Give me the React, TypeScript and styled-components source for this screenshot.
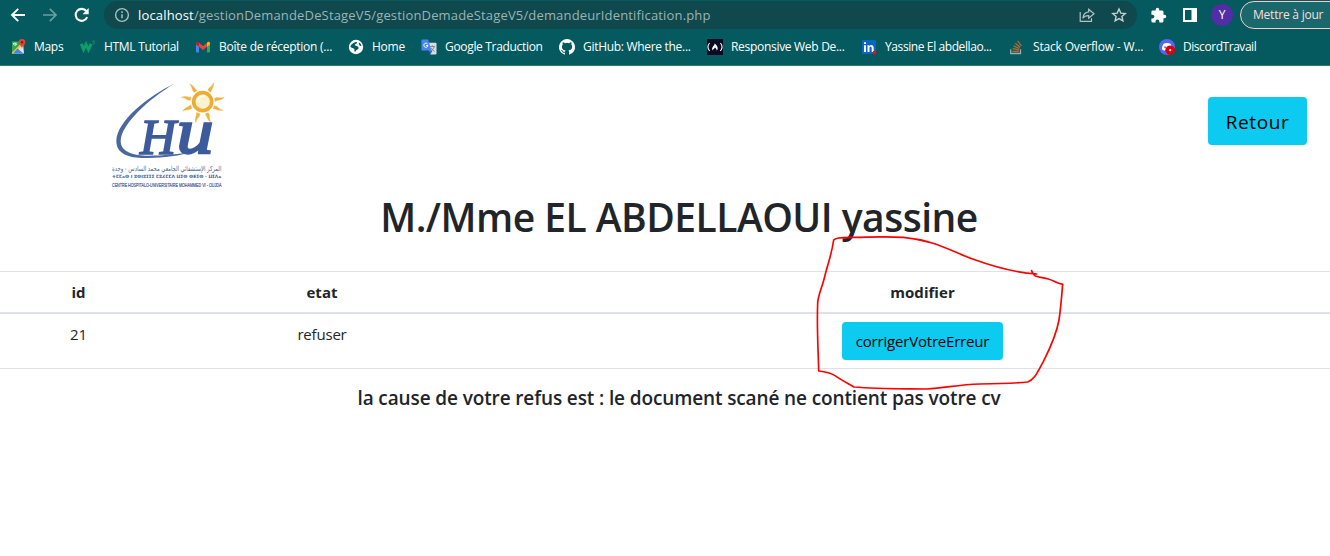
import React from 'react';
import styled, { createGlobalStyle } from 'styled-components';

const GlobalStyle = createGlobalStyle`
  *, *::before, *::after { box-sizing: border-box; }
  body {
    margin: 0;
    overflow: hidden;
    background: #fff;
    color: #212529;
    font-family: "Open Sans", "Noto Sans", sans-serif;
    font-size: 16px;
    line-height: 1.5;
  }
`;

const Browser = styled.div`
  width: 100%;
  height: 556px;
  overflow: hidden;
  position: relative;
`;

const Chrome = styled.header`
  height: 66px;
  background: #045a5f;
  border-bottom: 1px solid #2f7a7e;
`;

const Toolbar = styled.div`
  display: flex;
  align-items: center;
  height: 30px;
  width: 1380px;
  padding: 1px 0 1px 10px;
`;

const NavIcons = styled.div`
  display: flex;
  gap: 16px;
  width: 94px;
  flex: none;
`;

const AddressBar = styled.div`
  display: flex;
  flex: none;
  align-items: center;
  width: 1033px;
  height: 28px;
  padding: 0 10px;
  border-radius: 14px;
  background: #0f484d;
`;

const Url = styled.span`
  flex: 1;
  margin-left: 8px;
  font-size: 13px;
  line-height: 20px;
  letter-spacing: 0.16px;
  color: #9bb4b6;
`;

const Host = styled.span`
  color: #fff;
`;

const PillActions = styled.div`
  display: flex;
  gap: 16px;
`;

const Actions = styled.div`
  display: flex;
  flex: none;
  align-items: center;
  margin-left: 13px;
`;

const PanelSlot = styled.span`
  margin-left: 16px;
`;

const Avatar = styled.span`
  width: 22px;
  height: 22px;
  margin: 0 7px 0 14px;
  border-radius: 50%;
  background: #512da8;
  color: #fff;
  font-size: 12px;
  line-height: 22px;
  text-align: center;
`;

const Update = styled.span`
  width: 118px;
  height: 28px;
  padding-left: 12px;
  border: 1px solid #f3cfca;
  border-radius: 14px;
  background: #1b686c;
  color: #f9dedb;
  font-size: 12px;
  line-height: 26px;
  letter-spacing: -0.22px;
  white-space: nowrap;
`;

const Bookmarks = styled.nav`
  display: flex;
  height: 34px;
  padding-left: 10px;
`;

const Bookmark = styled.span<{ $width: number; $spacing?: number }>`
  display: flex;
  align-items: center;
  flex: none;
  gap: 8px;
  width: ${(p) => p.$width}px;
  color: #fff;
  font-size: 12px;
  line-height: 16px;
  letter-spacing: ${(p) => p.$spacing ?? -0.25}px;
  white-space: nowrap;
`;

const Icon = styled.svg`
  display: block;
  flex: none;
  overflow: visible;
`;

const Page = styled.main`
  width: 1358px;
`;

const Banner = styled.div`
  display: flex;
  justify-content: space-between;
  align-items: flex-start;
  height: 125px;
  padding: 4px 51px 0 100px;
`;

const Button = styled.button<{ $large?: boolean }>`
  height: ${(p) => (p.$large ? 48 : 38)}px;
  width: ${(p) => (p.$large ? 99 : 161)}px;
  margin-top: ${(p) => (p.$large ? 27 : 0)}px;
  padding: ${(p) => (p.$large ? 2 : 1)}px 0 0;
  border: 0;
  border-radius: 4px;
  background: #0dcaf0;
  color: #000;
  font-family: inherit;
  font-size: ${(p) => (p.$large ? 19 : 15)}px;
  font-weight: 400;
  letter-spacing: ${(p) => (p.$large ? 0.6 : -0.2)}px;
  line-height: 24px;
  vertical-align: top;
`;

const Title = styled.h1`
  margin: 0;
  padding-top: 2px;
  height: 80px;
  font-size: 39px;
  font-weight: 600;
  line-height: 48px;
  letter-spacing: -0.52px;
  text-align: center;
`;

const Table = styled.table`
  width: 100%;
  table-layout: fixed;
  border-collapse: collapse;
  font-size: 15px;
  line-height: 24px;
  text-align: center;
`;

const HeadCell = styled.th`
  height: 41px;
  padding: 0 8px;
  border-top: 1px solid #dee2e6;
  border-bottom: 2px solid #dee2e6;
  font-weight: 700;
  letter-spacing: 0.05px;
`;

const Cell = styled.td`
  height: 55px;
  padding: 8px;
  border-bottom: 1px solid #dee2e6;
  letter-spacing: -0.2px;
  vertical-align: top;
`;

const Reason = styled.h5`
  margin: 17px 0 0;
  font-size: 19px;
  font-weight: 600;
  line-height: 24px;
  letter-spacing: -0.12px;
  text-align: center;
`;

const Annotation = styled.svg`
  position: absolute;
  left: 800px;
  top: 225px;
  pointer-events: none;
`;

const BackIcon = () => (
  <Icon width="16" height="16" viewBox="0 0 16 16" fill="none" stroke="#fff" strokeWidth="1.9">
    <path d="M15 8H2.2M8.2 1.8 2 8l6.2 6.2" />
  </Icon>
);

const ForwardIcon = () => (
  <Icon width="16" height="16" viewBox="0 0 16 16" fill="none" stroke="#6a9fa2" strokeWidth="1.7">
    <path d="M1 8h12.8M7.8 1.8 14 8l-6.2 6.2" />
  </Icon>
);

const ReloadIcon = () => (
  <Icon width="16" height="16" viewBox="0 0 16 16">
    <path d="M13.2 10.2A6 6 0 1 1 12.3 4" fill="none" stroke="#fff" strokeWidth="2.1" />
    <path d="M14.7 1v6.2H8.5z" fill="#fff" />
  </Icon>
);

const InfoIcon = () => (
  <Icon width="16" height="16" viewBox="0 0 16 16" fill="none" stroke="#a9bfc0" strokeWidth="1.4">
    <circle cx="8" cy="8" r="6.4" />
    <path d="M8 7.2v4M8 4.3v1.6" strokeWidth="1.5" />
  </Icon>
);

const ShareIcon = () => (
  <Icon width="16" height="16" viewBox="0 0 16 16" fill="none" stroke="#b1c3c4" strokeWidth="1.2">
    <path d="M1.2 5v9.3h11.3v-3" />
    <path d="M9.7 2.2 15 6.7l-5.3 4.4V8.6C6.7 8.5 5 9.4 3.8 11.2 4.2 7.7 6.2 5.2 9.7 4.8z" />
  </Icon>
);

const StarIcon = () => (
  <Icon width="16" height="16" viewBox="0 0 16 16" fill="none" stroke="#c3d1d2" strokeWidth="1.4">
    <path d="m8 2 1.8 4.1 4.5.4-3.4 3 1 4.4L8 11.6l-3.9 2.3 1-4.4-3.4-3 4.5-.4z" />
  </Icon>
);

const PuzzleIcon = () => (
  <Icon width="17" height="17" viewBox="0 0 24 24" fill="#fff">
    <path d="M20.5 11H19V7a2 2 0 0 0-2-2h-4V3.5a2.5 2.5 0 0 0-5 0V5H4a2 2 0 0 0-2 2v3.8h1.5a2.7 2.7 0 0 1 0 5.4H2V20a2 2 0 0 0 2 2h3.8v-1.5a2.7 2.7 0 0 1 5.4 0V22H17a2 2 0 0 0 2-2v-4h1.5a2.5 2.5 0 0 0 0-5z" />
  </Icon>
);

const PanelIcon = () => (
  <Icon width="14" height="14" viewBox="0 0 14 14">
    <path fill="#fff" fillRule="evenodd" d="M0 0h14v14H0zM2 2v10h6.5V2z" />
  </Icon>
);

const MapsIcon = () => (
  <Icon width="16" height="16" viewBox="0 0 16 16">
    <path d="M2 2.5h11v12H2z" fill="#34a853" />
    <path d="M2 14.5 13 3.5l1 11z" fill="#dfe6e9" />
    <path d="m1.5 14 11-11 1.5 1.5-10.5 10.5z" fill="#fbc02d" />
    <path d="m7.5 9.5 6 5H3z" fill="#4285f4" />
    <path d="M3.6 4.2h3M3.5 4.2a1.5 1.5 0 1 0 3 .9H5" fill="none" stroke="#fff" strokeWidth=".9" />
    <path d="M12 0a3.3 3.3 0 0 1 3.3 3.3C15.3 6 12.3 6.5 12 10c-.3-3.5-3.3-4-3.3-6.7A3.3 3.3 0 0 1 12 0z" fill="#ea4335" />
    <circle cx="12" cy="3.3" r="1.2" fill="#7b1e16" />
  </Icon>
);

const SchoolsIcon = () => (
  <Icon width="16" height="16" viewBox="0 0 16 16" fill="none" stroke="#0b9f66">
    <path d="m1.2 4.8 2.4 5.8L6 5.4l2.5 5.2 2.6-5.8" strokeWidth="3" />
    <path d="M12.5 2h2l-1.200 1.400c1.600 0 1.500 2.200-.8 1.700" strokeWidth=".8" />
  </Icon>
);

const GmailIcon = () => (
  <Icon width="16" height="16" viewBox="0 0 16 16">
    <path d="M1 4h3v9.5H2a1 1 0 0 1-1-1z" fill="#4285f4" />
    <path d="M12 4h3v8.5a1 1 0 0 1-1 1h-2z" fill="#34a853" />
    <path d="M4 3.8 8 7l4-3.2v4L8 11 4 7.8z" fill="#ea4335" />
    <path d="M1 4.5C1 2.6 2.7 2.3 4 3.5v4.3L1 5.6z" fill="#c5221f" />
    <path d="M15 4.5c0-1.9-1.7-2.2-3-1v4.3l3-2.2z" fill="#fbbc04" />
  </Icon>
);

const GlobeIcon = () => (
  <Icon width="16" height="16" viewBox="0 0 16 16">
    <circle cx="8" cy="8" r="7.2" fill="#fff" />
    <path d="M2.3 7.8C3 5 5 4.2 7 3.2c1.5-.6 2.3 0 1.8 1-.5.9-2 .8-2 1.9 0 1 2.7.7 3.5 1.9.9 1.3-.4 2.6-1.6 3-.9.3-.9 1.5-1.8 1.7-1-.4.1-2.2-.9-3C4.9 9 3.600 9.100 2.3 7.800zM10.800 3.600c1.500.6 2.300 1.800 2.600 3.300-1.300.5-2.800-.9-2.600-3.300z" fill="#045a5f" />
  </Icon>
);

const TranslateIcon = () => (
  <Icon width="16" height="16" viewBox="0 0 17 17">
    <path d="M7 4h8.5a1 1 0 0 1 1 1v10.5a1 1 0 0 1-1 1H10z" fill="#dadce0" />
    <path d="M9.5 8H15M12.2 6.800V8M14 8c-.5 2.300-2 4-4 5M11 9.500c.5 1.500 2 3 3.500 3.500" fill="none" stroke="#718087" strokeWidth=".9" />
    <path d="M1.5.5h6l3.700 11.800H1.500a1 1 0 0 1-1-1v-9.800a1 1 0 0 1 1-1z" fill="#4a86ee" />
    <path d="m8.5 12.300 1.700 4.200 2-4.200z" fill="#3367d6" />
    <path d="M7 5.300a2.200 2.200 0 1 0 .4 1.700H5.300" fill="none" stroke="#fff" strokeWidth="1" />
  </Icon>
);

const GithubIcon = () => (
  <Icon width="16" height="16" viewBox="0 0 16 16" fill="#fff">
    <path d="M8 0a8 8 0 0 0-2.53 15.59c.4.07.55-.17.55-.38v-1.49c-2.01.37-2.53-.49-2.69-.94-.09-.23-.48-.94-.82-1.13-.28-.15-.68-.52-.01-.53.63-.01 1.08.58 1.23.82.72 1.21 1.87.87 2.33.66.07-.52.28-.87.51-1.07-1.78-.2-3.64-.89-3.64-3.95 0-.87.31-1.59.82-2.15-.08-.2-.36-1.02.08-2.12 0 0 .67-.21 2.2.82a7.600 7.600 0 0 1 4 0c1.530-1.040 2.200-.82 2.200-.82.44 1.100.16 1.920.08 2.120.51.56.82 1.270.82 2.150 0 3.070-1.870 3.750-3.650 3.950.29.25.54.73.54 1.480v2.200c0 .21.15.46.55.38A8 8 0 0 0 8 0z" />
  </Icon>
);

const CampIcon = () => (
  <Icon width="16" height="16" viewBox="0 0 16 16">
    <path fill="#0a0a23" d="M0 0h16v16H0z" />
    <path d="M2.600 4c-2 2.400-2 5.600 0 8M13.400 4c2 2.400 2 5.600 0 8" fill="none" stroke="#fff" strokeWidth="1.1" />
    <path d="M5.800 11.600c-1.500-1.800-.4-3.400 1-5 .5-.7.800-1.300.6-2.200 2.200 1.100 3.400 3.300 3.300 5.200 0 .9-.4 1.600-1 2C9.600 10.100 9 9.200 7.900 8.500c-.2 1.200-2.200 1.500-2.100 3.100z" fill="#fff" />
  </Icon>
);

const LinkedinIcon = () => (
  <Icon width="16" height="16" viewBox="0 0 16 16">
    <rect x="1" y="1" width="14" height="14" rx="1" fill="#0a66c2" />
    <path d="M3 6.200h2V13H3zM3 3.200h2v1.900H3zM6.500 6.200h1.900v1c1.200-1.800 4.300-1.500 4.300 1.600V13h-2V9.200c0-1.900-2.200-1.900-2.200 0V13h-2z" fill="#fff" />
    <circle cx="13.5" cy="13.8" r="2" fill="#e01020" />
  </Icon>
);

const StackIcon = () => (
  <Icon width="16" height="16" viewBox="0 0 16 16" fill="none">
    <path d="M1.700 10.300v4.200h9.800v-4.200" stroke="#9fa9a5" strokeWidth="1.3" />
    <path d="M3.500 12.300h6.300M3.700 9.700l6.200 1.200M4.600 6.900l5.800 2.600M6.300 4.300l4.900 4M8.700 1.900l3.700 5.100" stroke="#bf6a2a" strokeWidth="1.2" />
  </Icon>
);

const DiscordIcon = () => (
  <Icon width="16" height="16" viewBox="0 0 16 16">
    <circle cx="8" cy="8" r="8" fill="#5865f2" />
    <path d="M4.600 4.700c2-1 4.800-1 6.800 0 1.300 1.800 1.800 3.800 1.500 5.800-.9.700-1.700 1-2.500 1.200l-.7-1H6.300l-.7 1c-.8-.2-1.600-.5-2.500-1.200-.3-2 .2-4 1.500-5.800z" fill="#fff" />
    <circle cx="6.100" cy="8.300" r="1" fill="#5865f2" />
    <circle cx="11.200" cy="11.200" r="4.800" fill="#db0010" />
    <circle cx="11.200" cy="11.200" r="1.100" fill="#fff" />
  </Icon>
);

const sunRays = [32, 80, 115, 160, 200, 246, 283, 325];

const HospitalLogo = () => (
  <Icon width="140" height="120" viewBox="0 0 420 360">
    <g transform="translate(308 95)">
      {sunRays.map((angle) => (
        <path
          key={angle}
          d="M-4 -37C-9 -46 1 -52 -2 -66C7 -54 1 -47 6 -37Z"
          fill="#f0b23c"
          stroke="#f0b23c"
          strokeWidth="1"
          transform={`rotate(${angle})`}
        />
      ))}
      <circle r="27" fill="#fff3cf" stroke="#efac34" strokeWidth="11" />
      <path d="M-17 4C-15 -10 -5 -18 7 -19" fill="none" stroke="#fff" strokeWidth="4" />
    </g>
    <path
      d="M225 40C141 81 51 153 49 213C49 255 93 266 145 264C190 263 240 259 282 243C240 253 190 257 145 257C101 256 62 247 62 212C65 163 144 88 225 40Z"
      fill="#4a679f"
    />
    <g fill="#3d5b9c" stroke="#3d5b9c" fontFamily="Liberation Serif, serif" fontStyle="italic">
      <text x="120" y="251" fontSize="152" strokeWidth="5" textLength="108" lengthAdjust="spacingAndGlyphs">H</text>
      <text x="230" y="248" fontSize="190" strokeWidth="7" textLength="110" lengthAdjust="spacingAndGlyphs">u</text>
    </g>
    <g fill="#4a5f90" fontFamily="DejaVu Sans, sans-serif">
      <text x="36" y="302" fontSize="21" textLength="328" lengthAdjust="spacingAndGlyphs">المركز الإستشفائي الجامعي محمد السادس - وجدة</text>
      <text x="36" y="325" fontSize="13" fontWeight="700" textLength="328" lengthAdjust="spacingAndGlyphs">ⵜⵎⵎⴰⵙ ⵏ ⵓⵙⵏⵓⵊⵊⵉ ⵎⵓⵃⵎⵎⴷ ⵡⵉⵙ ⵙⴹⵉⵙ - ⵡⵊⴷⴰ</text>
      <text x="36" y="350" fontSize="18" fill="#35569a" stroke="#35569a" strokeWidth=".6" fontFamily="Liberation Sans, sans-serif" textLength="328" lengthAdjust="spacingAndGlyphs">CENTRE HOSPITALO-UNIVERSITAIRE MOHAMMED VI - OUJDA</text>
    </g>
  </Icon>
);

export default function App() {
  return (
    <Browser>
      <GlobalStyle />
      <Chrome>
        <Toolbar>
          <NavIcons><BackIcon /><ForwardIcon /><ReloadIcon /></NavIcons>
          <AddressBar>
            <InfoIcon />
            <Url><Host>localhost</Host>/gestionDemandeDeStageV5/gestionDemadeStageV5/demandeurIdentification.php</Url>
            <PillActions><ShareIcon /><StarIcon /></PillActions>
          </AddressBar>
          <Actions>
            <PuzzleIcon />
            <PanelSlot><PanelIcon /></PanelSlot>
            <Avatar>Y</Avatar>
            <Update>Mettre à jour</Update>
          </Actions>
        </Toolbar>
        <Bookmarks>
          <Bookmark $width={70} $spacing={-0.3}><MapsIcon />Maps</Bookmark>
          <Bookmark $width={115} $spacing={-0.3}><SchoolsIcon />HTML Tutorial</Bookmark>
          <Bookmark $width={153}><GmailIcon />Boîte de réception (...</Bookmark>
          <Bookmark $width={73}><GlobeIcon />Home</Bookmark>
          <Bookmark $width={138} $spacing={-0.32}><TranslateIcon />Google Traduction</Bookmark>
          <Bookmark $width={148} $spacing={-0.3}><GithubIcon />GitHub: Where the...</Bookmark>
          <Bookmark $width={154} $spacing={-0.3}><CampIcon />Responsive Web De...</Bookmark>
          <Bookmark $width={148} $spacing={-0.4}><LinkedinIcon />Yassine El abdellao...</Bookmark>
          <Bookmark $width={150} $spacing={-0.17}><StackIcon />Stack Overflow - W...</Bookmark>
          <Bookmark $width={120} $spacing={-0.45}><DiscordIcon />DiscordTravail</Bookmark>
        </Bookmarks>
      </Chrome>
      <Page>
        <Banner>
          <HospitalLogo />
          <Button $large>Retour</Button>
        </Banner>
        <Title>M./Mme EL ABDELLAOUI yassine</Title>
        <Table>
          <colgroup>
            <col width="157" />
            <col width="330" />
            <col width="871" />
          </colgroup>
          <thead>
            <tr><HeadCell>id</HeadCell><HeadCell>etat</HeadCell><HeadCell>modifier</HeadCell></tr>
          </thead>
          <tbody>
            <tr>
              <Cell>21</Cell>
              <Cell>refuser</Cell>
              <Cell><Button>corrigerVotreErreur</Button></Cell>
            </tr>
          </tbody>
        </Table>
        <Reason>la cause de votre refus est : le document scané ne contient pas votre cv</Reason>
      </Page>
      <Annotation width="270" height="170" viewBox="0 0 810 510" fill="none" stroke="#f00" strokeWidth="5" strokeLinejoin="round" strokeLinecap="round">
        <path d="M710 147C660 144 600 132 520 103C450 77 400 45 310 37C240 33 190 38 150 37C120 37 105 40 101 45C94 95 80 125 73 160C65 190 53 215 53 235C50 310 55 380 56 438C75 440 90 442 105 452C125 466 145 476 162 486C230 492 300 491 380 492C440 489 470 479 540 477C600 476 650 474 683 471C705 464 715 435 730 410C750 370 770 325 777 285C783 245 785 210 788 178C770 176 760 166 745 162C730 158 715 157 706 153C700 149 697 144 695 137" />
      </Annotation>
    </Browser>
  );
}
